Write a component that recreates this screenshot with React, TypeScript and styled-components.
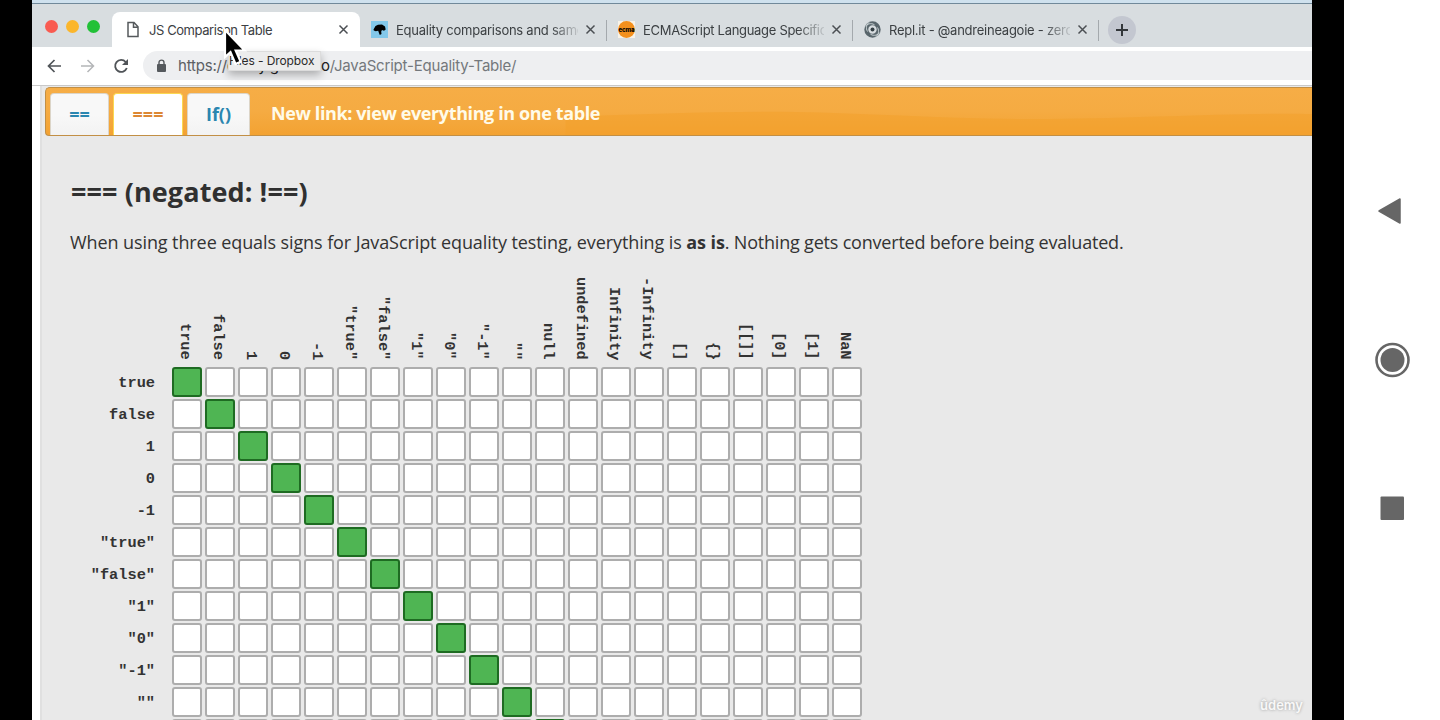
import React from "react";
import styled, { createGlobalStyle } from "styled-components";

const Global = createGlobalStyle`
  * { box-sizing: border-box; }
  body { margin: 0; background: #fff; overflow: hidden; }
`;
const ui = `Inter, "Liberation Sans", sans-serif`;
const humanist = `"Open Sans", "Noto Sans", sans-serif`;

const Screen = styled.div`
  display: flex;
  width: 1440px;
  height: 720px;
  overflow: hidden;
`;
const Video = styled.div`
  width: 1344px;
  padding: 0 32px;
  background: #000;
  display: flex;
`;
const Browser = styled.div`
  position: relative;
  width: 1280px;
  height: 720px;
  display: flex;
  flex-direction: column;
  overflow: hidden;
  background: #e9e9e9;
`;
const DesktopEdge = styled.div`
  flex: none;
  height: 4px;
  background: #cfe1ee;
  border-bottom: 1px solid #71899a;
`;
const TabStrip = styled.div`
  flex: none;
  height: 43px;
  display: flex;
  background: #d8dde0;
`;
const Lights = styled.div`
  width: 80px;
  padding: 16px 0 0 13px;
  display: flex;
  gap: 8px;
`;
const Light = styled.span<{ $c: string }>`
  width: 13px;
  height: 13px;
  border-radius: 50%;
  background: ${(p) => p.$c};
`;
const Tab = styled.div<{ $active?: boolean; $w: number }>`
  width: ${(p) => p.$w}px;
  height: 35px;
  margin-top: 8px;
  padding: ${(p) => (p.$active ? "0 11px 0 13px" : "0 10px 0 11px")};
  display: flex;
  align-items: center;
  background: ${(p) => (p.$active ? "#fff" : "transparent")};
  border-radius: 8px 8px 0 0;
`;
const TabTitle = styled.span<{ $fade?: boolean; $ls: number }>`
  flex: 1;
  margin: 0 7px 0 8px;
  overflow: hidden;
  white-space: nowrap;
  font: 400 13px/20px ${ui};
  letter-spacing: ${(p) => p.$ls}px;
  color: #3c4043;
  ${(p) => p.$fade && "mask-image: linear-gradient(to right, #000 85%, rgba(0, 0, 0, 0.15) 100%);"}
`;
const InactiveTabs = styled.div`
  display: flex;
`;
const Separator = styled.i`
  flex: none;
  width: 1px;
  height: 21px;
  margin-top: 16px;
  background: #a4a9ad;
`;
const NewTab = styled.div`
  width: 28px;
  height: 28px;
  margin: 12px 0 0 9px;
  border-radius: 50%;
  background: #c3c7d0;
  display: grid;
  place-items: center;
`;
const Toolbar = styled.div`
  flex: none;
  height: 39px;
  padding: 4px 0 0 15px;
  display: flex;
  background: #fff;
  border-bottom: 1px solid #c9c9c9;
`;
const NavButtons = styled.div`
  width: 96px;
  height: 30px;
  display: flex;
  align-items: center;
  gap: 18px;
`;
const Address = styled.div`
  flex: 1;
  height: 29px;
  padding: 1px 0 0 13px;
  display: flex;
  align-items: center;
  gap: 11px;
  border-radius: 15px 0 0 15px;
  background: #eeeff1;
`;
const Url = styled.span`
  font: 400 15px/20px ${ui};
  letter-spacing: -0.2px;
  color: #74787c;
  white-space: nowrap;
  b { font-weight: 400; color: #202124; }
  i { font-style: normal; color: #5c6064; }
`;
const Page = styled.div`
  flex: 1;
  margin-left: 8px;
  padding-top: 1px;
  border-left: 2px solid #e0e0e0;
  box-shadow: -8px 0 0 #fff;
  background: #e9e9e9;
`;
const PageNav = styled.div`
  position: relative;
  height: 49px;
  margin-left: 3px;
  padding: 5px 0 0 4px;
  display: flex;
  border: 1px solid #c28f45;
  border-right: 0;
  border-radius: 5px 0 0 4px;
  background: linear-gradient(#f6ad46, #f5ab42 50%, #f3a232);
  overflow: hidden;
`;
const Gloss = styled.svg`
  position: absolute;
  inset: 0;
  width: 100%;
  height: 100%;
`;
const PageTab = styled.div<{ $w: number; $active?: boolean }>`
  position: relative;
  width: ${(p) => p.$w}px;
  height: 43px;
  margin-right: 4px;
  border-radius: 4px 4px 0 0;
  border: 1px solid ${(p) => (p.$active ? "#fbd850" : "#dcd5c8")};
  border-bottom: 0;
  background: ${(p) => (p.$active ? "#fff" : "linear-gradient(#f8f8f8 50%, #f2f2f2)")};
  color: ${(p) => (p.$active ? "#dc8733" : "#2a86b0")};
  font: 700 18px/41px ${humanist};
  text-align: center;
`;
const NavLink = styled.span`
  position: relative;
  margin-left: 17px;
  font: 700 18px/40px ${humanist};
  letter-spacing: -0.39px;
  color: #fffbe9;
  white-space: nowrap;
`;
const Heading = styled.h1`
  margin: 38px 0 0 29px;
  font: 700 27px/36px ${humanist};
  letter-spacing: 0.1px;
  color: #303030;
`;
const Intro = styled.p`
  margin: 19px 0 0 28px;
  font: 400 18px/26px ${humanist};
  letter-spacing: -0.095px;
  color: #333;
  white-space: nowrap;
`;
const IntroEnd = styled.span`
  letter-spacing: -0.2px;
`;
const Table = styled.div`
  margin: 18px 0 0 0;
  display: grid;
  grid-template-columns: 127px repeat(21, 30px);
  grid-template-rows: 92px;
  grid-auto-rows: 30px;
  column-gap: 3px;
  row-gap: 2px;
`;
const ColumnLabel = styled.span`
  justify-self: center;
  align-self: end;
  margin: 0 4px 5px 0;
  writing-mode: vertical-rl;
  font: 700 15.3px/18px "Liberation Mono", monospace;
  color: #333;
  white-space: pre;
`;
const RowLabel = styled.span`
  padding-right: 14px;
  text-align: right;
  font: 700 15.3px/32px "Liberation Mono", monospace;
  color: #333;
`;
const Cell = styled.span<{ $on: boolean }>`
  border: 2px solid ${(p) => (p.$on ? "#1e6b22" : "#adadad")};
  border-radius: 3px;
  background: ${(p) => (p.$on ? "#4fb553" : "#fff")};
`;
const Tooltip = styled.div`
  position: absolute;
  left: 196px;
  top: 51px;
  width: 93px;
  height: 20px;
  padding-right: 7px;
  text-align: right;
  font: 400 12px/18px ${ui};
  letter-spacing: -0.1px;
  color: #2a2a2a;
  background: #ececec;
  border: 1px solid #dcdcdc;
  box-shadow: 0 4px 8px rgba(0, 0, 0, 0.28);
  white-space: nowrap;
`;
const Cursor = styled.svg`
  position: absolute;
  left: 191px;
  top: 28px;
`;
const Watermark = styled.span`
  position: absolute;
  right: 9px;
  bottom: 6px;
  font: 600 13px/18px ${ui};
  color: #f8f8f8;
  text-shadow: 0 0 3px #999;
`;
const PhoneNav = styled.nav`
  width: 96px;
  padding-top: 193px;
  display: flex;
  flex-direction: column;
  align-items: center;
  gap: 112.6px;
  background: #fff;
`;

const CloseIcon = () => (
  <svg width="11" height="11" viewBox="0 0 11 11" stroke="#4b4f53" strokeWidth="1.5"><path d="M1.5 1.5l8 8M9.5 1.5l-8 8" /></svg>
);
const FileIcon = () => (
  <svg width="16" height="17" viewBox="0 0 16 17" fill="none" stroke="#55595c" strokeWidth="1.5"><path d="M3 1.5h6l4 4.200v9.800H3zM8.500 1.500v4.700H13" /></svg>
);
const MdnIcon = () => (
  <svg width="17" height="17" viewBox="0 0 17 17"><path fill="#83c8ea" d="M0 0h17v17H0z" /><path d="M2.500 8.500L4.500 5 7 3.700l4-.2 3 2 .7 3-1.700 1.200-2-.6-.8 1.400.3 2.500L8.800 14l-1-2.500-.6-1.700-2.400.4-2-.6z" /></svg>
);
const EcmaIcon = () => (
  <svg width="17" height="17" viewBox="0 0 17 17"><path fill="#f8f3e8" d="M0 0h17v17H0z" /><circle cx="8.500" cy="8.500" r="8.400" fill="#f3901d" /><text x="8.500" y="10.500" textAnchor="middle" fontFamily="Inter, sans-serif" fontWeight="800" fontSize="6" textLength="16">ecma</text></svg>
);
const ReplIcon = () => (
  <svg width="17" height="17" viewBox="0 0 17 17" fill="none" stroke="#59666c">
    <circle cx="8.500" cy="8.500" r="6.200" strokeWidth="4" />
    <path stroke="#c9d2d5" strokeWidth="1" d="M1 5.500C3 3 7 1.500 10.500 3.800M16 11.500c-2 2.500-6 4-9.500 1.700M5.500 1c-3 2-4 6-2 9.500M11.500 16c3-2 4-6 2-9.500" />
    <circle cx="8.500" cy="8.500" r="2" fill="#343f44" stroke="none" />
  </svg>
);
const BackIcon = () => (
  <svg width="15" height="14" viewBox="0 0 15 14" fill="none" stroke="#505458" strokeWidth="1.700"><path d="M14 7H2M7.500 1L1.500 7l6 6" /></svg>
);
const ForwardIcon = () => (
  <svg width="15" height="14" viewBox="0 0 15 14" fill="none" stroke="#b4b6b8" strokeWidth="1.500"><path d="M1 7h12M7.500 1l6 6-6 6" /></svg>
);
const ReloadIcon = () => (
  <svg width="16" height="16" viewBox="0 0 16 16" fill="none" stroke="#505458" strokeWidth="1.800"><path d="M13.800 10A6 6 0 1 1 12.700 4L14 5.500" /><path fill="#505458" stroke="none" d="M15 1v6H9z" /></svg>
);
const LockIcon = () => (
  <svg width="11" height="14" viewBox="0 0 11 14"><rect x="1" y="5" width="9" height="8" rx="1" fill="#55595d" /><path d="M3 6V3.600a2.500 2.500 0 0 1 5 0V6" fill="none" stroke="#55595d" strokeWidth="1.400" /></svg>
);

const columns = ["true", "false", "1", "0", "-1", '"true"', '"false"', '"1"', '"0"', '"-1"', '""', "null", "undefined", "Infinity", "-Infinity", "[]", "{}", "[[]]", "[0]", "[1]", "NaN"];
const rows = columns.slice(0, 12);

export default function App() {
  return (
    <Screen>
      <Global />
      <Video>
        <Browser>
          <DesktopEdge />
          <TabStrip>
            <Lights><Light $c="#f95b51" /><Light $c="#fbb62c" /><Light $c="#22c137" /></Lights>
            <Tab $active $w={248}><FileIcon /><TabTitle $ls={-0.42}>JS Comparison Table</TabTitle><CloseIcon /></Tab>
            <InactiveTabs>
              <Tab $w={246}><MdnIcon /><TabTitle $fade $ls={-0.25}>Equality comparisons and same</TabTitle><CloseIcon /></Tab>
              <Separator />
              <Tab $w={245}><EcmaIcon /><TabTitle $fade $ls={-0.3}>ECMAScript Language Specific</TabTitle><CloseIcon /></Tab>
              <Separator />
              <Tab $w={245}><ReplIcon /><TabTitle $fade $ls={-0.25}>Repl.it - @andreineagoie - zero</TabTitle><CloseIcon /></Tab>
              <Separator />
              <NewTab><svg width="14" height="14" viewBox="0 0 14 14" stroke="#33373b" strokeWidth="2"><path d="M7 1v12M1 7h12" /></svg></NewTab>
            </InactiveTabs>
          </TabStrip>
          <Toolbar>
            <NavButtons><BackIcon /><ForwardIcon /><ReloadIcon /></NavButtons>
            <Address><LockIcon /><Url><i>https://</i><b>dorey.github.io</b>/JavaScript-Equality-Table/</Url></Address>
          </Toolbar>
          <Page>
            <PageNav>
              <Gloss viewBox="0 0 1267 47" preserveAspectRatio="none"><path fill="#f3a02c" d="M520 29C600 26 680 23 750 24S900 31 990 31 1200 24 1267 26V47H520z" opacity=".55" /></Gloss>
              <PageTab $w={59}>==</PageTab>
              <PageTab $w={70} $active>===</PageTab>
              <PageTab $w={63}>If()</PageTab>
              <NavLink>New link: view everything in one table</NavLink>
            </PageNav>
            <Heading>=== (negated: !==)</Heading>
            <Intro>When using three equals signs for JavaScript equality testing, everything is <b>as is</b><IntroEnd>. Nothing gets converted before being evaluated.</IntroEnd></Intro>
            <Table>
              <span />
              {columns.map((c) => <ColumnLabel key={c}>{c}</ColumnLabel>)}
              {rows.map((r, y) => (
                <React.Fragment key={r}>
                  <RowLabel>{r}</RowLabel>
                  {columns.map((c, x) => <Cell key={c} $on={x === y} />)}
                </React.Fragment>
              ))}
            </Table>
          </Page>
          <Tooltip>Files - Dropbox</Tooltip>
          <Cursor width="24" height="38" viewBox="0 0 24 38"><path d="M2 2v27l5.500-5 5 12 5.200-2.200-5-11.300h9z" fill="#000" stroke="#fff" strokeWidth="2.200" /></Cursor>
          <Watermark>ûdemy</Watermark>
        </Browser>
      </Video>
      <PhoneNav>
        <svg width="36" height="36" viewBox="0 0 36 36"><path d="M5 18L26 6v24z" fill="#666" stroke="#666" strokeWidth="1.500" strokeLinejoin="round" /></svg>
        <svg width="36" height="36" viewBox="0 0 36 36"><circle cx="18.500" cy="18" r="16" fill="none" stroke="#666" strokeWidth="2.600" /><circle cx="18.500" cy="18" r="12" fill="#666" /></svg>
        <svg width="36" height="36" viewBox="0 0 36 36"><rect x="6.500" y="6.500" width="23.500" height="23.500" rx="1" fill="#666" /></svg>
      </PhoneNav>
    </Screen>
  );
}
